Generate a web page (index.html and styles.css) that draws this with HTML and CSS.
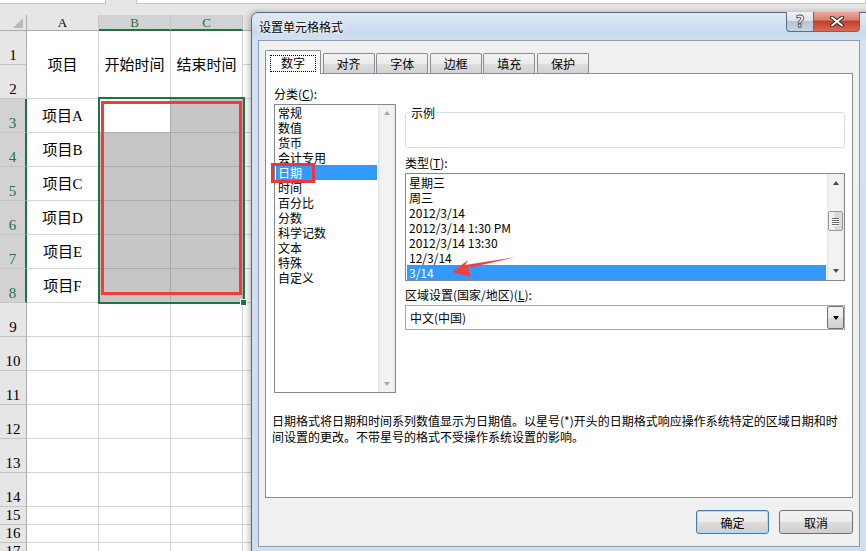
FILE: index.html
```html
<!DOCTYPE html>
<html lang="zh-CN">
<head>
  <meta charset="UTF-8">
  <title>设置单元格格式</title>
  <link rel="stylesheet" href="styles.css">
</head>
<body>
  <!-- Worksheet -->
  <div class="sheet">
    <div class="strip">
      <div class="name-box"></div>
      <div class="formula-box"></div>
    </div>

    <div class="stack">
      <div class="cells">
        <div class="corner"></div>
        <div class="ch">A</div>
        <div class="ch sel">B</div>
        <div class="ch sel">C</div>
        <div class="ch">D</div>

        <div class="rh">1</div>
        <div class="c span2">项目</div>
        <div class="c span2">开始时间</div>
        <div class="c span2">结束时间</div>
        <div class="c"></div>
        <div class="rh">2</div>
        <div class="c"></div>

        <div class="rh sel">3</div>
        <div class="c">项目A</div>
        <div class="c pick active"></div>
        <div class="c pick"></div>
        <div class="c"></div>

        <div class="rh sel">4</div>
        <div class="c">项目B</div>
        <div class="c pick"></div>
        <div class="c pick"></div>
        <div class="c"></div>

        <div class="rh sel">5</div>
        <div class="c">项目C</div>
        <div class="c pick"></div>
        <div class="c pick"></div>
        <div class="c"></div>

        <div class="rh sel">6</div>
        <div class="c">项目D</div>
        <div class="c pick"></div>
        <div class="c pick"></div>
        <div class="c"></div>

        <div class="rh sel">7</div>
        <div class="c">项目E</div>
        <div class="c pick"></div>
        <div class="c pick"></div>
        <div class="c"></div>

        <div class="rh sel">8</div>
        <div class="c">项目F</div>
        <div class="c pick"></div>
        <div class="c pick"></div>
        <div class="c"></div>

        <div class="rh">9</div><div class="c"></div><div class="c"></div><div class="c"></div><div class="c"></div>
        <div class="rh">10</div><div class="c"></div><div class="c"></div><div class="c"></div><div class="c"></div>
        <div class="rh">11</div><div class="c"></div><div class="c"></div><div class="c"></div><div class="c"></div>
        <div class="rh">12</div><div class="c"></div><div class="c"></div><div class="c"></div><div class="c"></div>
        <div class="rh">13</div><div class="c"></div><div class="c"></div><div class="c"></div><div class="c"></div>
        <div class="rh">14</div><div class="c"></div><div class="c"></div><div class="c"></div><div class="c"></div>
        <div class="rh">15</div><div class="c"></div><div class="c"></div><div class="c"></div><div class="c"></div>
        <div class="rh">16</div><div class="c"></div><div class="c"></div><div class="c"></div><div class="c"></div>
        <div class="rh">17</div><div class="c"></div><div class="c"></div><div class="c"></div><div class="c"></div>
      </div>

      <!-- selection marks, same grid as the cells -->
      <div class="marks">
        <div class="sel-box">
          <div class="red-box"></div>
          <div class="handle"></div>
        </div>
      </div>
    </div>
  </div>

  <!-- Format Cells dialog -->
  <div class="dialog">
    <div class="titlebar">
      <div class="title">设置单元格格式</div>
      <div class="caption-btn help">?</div>
      <div class="caption-btn close">
        <svg width="14" height="11" viewBox="0 0 14 11"><path d="M2 1.5 L12 9.5 M12 1.5 L2 9.5" stroke="#3b2a28" stroke-width="4" stroke-linecap="round"/><path d="M2 1.5 L12 9.5 M12 1.5 L2 9.5" stroke="#fff" stroke-width="2" stroke-linecap="round"/></svg>
      </div>
    </div>

    <div class="dlg-body">
      <div class="tabs">
        <div class="tab active"><span class="focus">数字</span></div>
        <div class="tab">对齐</div>
        <div class="tab">字体</div>
        <div class="tab">边框</div>
        <div class="tab">填充</div>
        <div class="tab">保护</div>
      </div>

      <div class="page">
        <div class="panes">
          <div class="left">
            <div class="label">分类(<u>C</u>):</div>
            <div class="listbox cat-list">
              <div class="items">
                <div class="item">常规</div>
                <div class="item">数值</div>
                <div class="item">货币</div>
                <div class="item">会计专用</div>
                <div class="item chosen">日期</div>
                <div class="item">时间</div>
                <div class="item">百分比</div>
                <div class="item">分数</div>
                <div class="item">科学记数</div>
                <div class="item">文本</div>
                <div class="item">特殊</div>
                <div class="item">自定义</div>
              </div>
              <div class="vscroll off">
                <div class="arrow up"></div>
                <div class="arrow down"></div>
              </div>
              <div class="mark-date"></div>
            </div>
          </div>

          <div class="right">
            <div class="sample">
              <span class="sample-label">示例</span>
            </div>
            <div class="label type-label">类型(<u>T</u>):</div>
            <div class="listbox type-list">
              <div class="items">
                <div class="item">星期三</div>
                <div class="item">周三</div>
                <div class="item">2012/3/14</div>
                <div class="item">2012/3/14 1:30 PM</div>
                <div class="item">2012/3/14 13:30</div>
                <div class="item">12/3/14</div>
                <div class="item chosen">3/14</div>
              </div>
              <div class="vscroll">
                <div class="arrow up"></div>
                <div class="thumb"><i></i><i></i><i></i><i></i></div>
                <div class="arrow down"></div>
              </div>
              <svg class="pointer" width="120" height="110" viewBox="0 0 120 110">
                <polygon points="47,99 63,87 60,92 111,84 63,95 66,104" fill="#f0403f"/>
              </svg>
            </div>
            <div class="label locale-label">区域设置(国家/地区)(<u>L</u>):</div>
            <div class="combo">
              <div class="combo-text">中文(中国)</div>
              <div class="combo-btn"><span class="arrow down dark"></span></div>
            </div>
          </div>
        </div>

        <div class="desc">日期格式将日期和时间系列数值显示为日期值。以星号(*)开头的日期格式响应操作系统特定的区域日期和时<br>间设置的更改。不带星号的格式不受操作系统设置的影响。</div>
      </div>

      <div class="actions">
        <div class="btn default">确定</div>
        <div class="btn">取消</div>
      </div>
    </div>
  </div>
</body>
</html>
```

FILE: styles.css
```css
* {
  margin: 0;
  padding: 0;
  box-sizing: border-box;
}

body {
  width: 866px;
  height: 551px;
  overflow: hidden;
  position: relative;
  background-color: #ffffff;
  font-family: "Noto Sans CJK SC", sans-serif;
  color: #000;
}

/* ---------- worksheet ---------- */

.sheet {
  width: 866px;
}

.strip {
  height: 15px;
  background-color: #e6e6e6;
  display: flex;
}

.name-box,
.formula-box {
  height: 4px;
  background-color: #ffffff;
  border-right: 1px solid #c6c6c6;
  border-bottom: 1px solid #c6c6c6;
}

.name-box {
  width: 106px;
}

.formula-box {
  margin-left: 30px;
  border-left: 1px solid #c6c6c6;
  flex-grow: 1;
}

.stack {
  display: grid;
}

.cells,
.marks {
  grid-area: 1 / 1;
  display: grid;
  grid-template-columns: 27px 72px 72px 72px 72px;
  grid-template-rows: 16px repeat(14, 34px) repeat(3, 18px);
}

.marks {
  pointer-events: none;
}

.corner {
  background-color: #e6e6e6;
  border-right: 1px solid #ababab;
  border-bottom: 1px solid #ababab;
  position: relative;
}

.corner::after {
  content: "";
  position: absolute;
  right: 3px;
  bottom: 2px;
  border-left: 10px solid transparent;
  border-bottom: 10px solid #b9b9b9;
}

.ch {
  background-color: #e6e6e6;
  border-right: 1px solid #c4c4c4;
  border-bottom: 1px solid #ababab;
  font: 13px/15px "Liberation Serif", serif;
  display: flex;
  align-items: center;
  justify-content: center;
}

.ch.sel {
  background-color: #d2d2d2;
  color: #217346;
  border-bottom: 2px solid #217346;
}

.rh {
  background-color: #e6e6e6;
  border-right: 1px solid #ababab;
  border-bottom: 1px solid #c4c4c4;
  font: 15px/16px "Liberation Serif", serif;
  display: flex;
  align-items: flex-end;
  justify-content: center;
  padding-bottom: 1px;
}

.rh.sel {
  background-color: #d2d2d2;
  color: #217346;
  border-right: 2px solid #217346;
}

.c {
  border-right: 1px solid #d4d4d4;
  border-bottom: 1px solid #d4d4d4;
  font: 15px/18px "Liberation Serif", "Noto Sans CJK SC", serif;
  display: flex;
  align-items: center;
  justify-content: center;
}

.c.span2 {
  grid-row: span 2;
}

.c.pick {
  background-color: #c6c6c6;
  border-color: #ababab;
}

.c.active {
  background-color: #ffffff;
}

.sel-box {
  grid-column: 3 / 5;
  grid-row: 4 / 10;
  margin: -2px -2px -1px -1px;
  border: 2px solid #217346;
  display: flex;
  flex-direction: column;
  position: relative;
}

.red-box {
  flex-grow: 1;
  margin: 2px 1px 7px 1px;
  border: 3px solid #f33b3b;
}

.handle {
  position: absolute;
  right: -4px;
  bottom: -4px;
  width: 7px;
  height: 7px;
  background-color: #217346;
  border: 1px solid #ffffff;
}

/* ---------- dialog ---------- */

.dialog {
  position: absolute;
  left: 251px;
  top: 12px;
  width: 630px;
  height: 545px;
  border: 1px solid #56697f;
  border-radius: 7px 7px 0 0;
  background: linear-gradient(180deg, #dfe9f5 0px, #c8daee 20px, #d3e2f2 28px, #cddff1 100%);
  padding-left: 6px;
  box-shadow: -2px 0 6px rgba(0, 0, 0, 0.25);
}

.titlebar {
  width: 602px;
  height: 27px;
  display: flex;
  align-items: center;
}

.title {
  font-size: 12px;
  line-height: 16px;
  padding-left: 1px;
  flex-grow: 1;
  text-shadow: 0 0 6px #ffffff, 0 0 3px #ffffff;
}

.caption-btn {
  align-self: flex-start;
  height: 20px;
  margin-top: -1px;
  border: 1px solid #5d6c80;
  border-top: none;
  display: flex;
  align-items: center;
  justify-content: center;
}

.help {
  width: 27px;
  border-radius: 0 0 0 4px;
  border-right: none;
  background: linear-gradient(180deg, #eef2f7 0%, #dbe2ea 45%, #b8c4d1 50%, #c9d4df 100%);
  font: bold 15px/16px "DejaVu Sans", sans-serif;
  color: #ffffff;
  -webkit-text-stroke: 0.8px #3f4b58;
}

.close {
  width: 47px;
  border-radius: 0 0 4px 0;
  background: linear-gradient(180deg, #e9a99a 0%, #d9826f 40%, #c4402b 50%, #d56b53 100%);
}

.dlg-body {
  width: 602px;
  height: 507px;
  border: 1px solid #8c9bae;
  background-color: #f0f0f0;
  padding: 9px 6px 0 6px;
}

.tabs {
  display: flex;
  height: 24px;
  margin-bottom: -1px;
  position: relative;
  z-index: 1;
  font-size: 12px;
}

.tab {
  width: 52px;
  height: 20px;
  margin-top: 3px;
  margin-left: 1.6px;
  border: 1px solid #898c95;
  border-bottom: none;
  border-radius: 2px 2px 0 0;
  background: linear-gradient(180deg, #f3f3f3 0%, #ebebeb 50%, #dedede 50%, #d2d2d2 100%);
  display: flex;
  align-items: center;
  justify-content: center;
  line-height: 16px;
}

.tab.active {
  width: 56px;
  height: 24px;
  margin: 0;
  background: #ffffff;
}

.focus {
  width: 46px;
  height: 17px;
  margin-top: 1px;
  border: 1px dotted #000;
  display: flex;
  align-items: center;
  justify-content: center;
}

.page {
  width: 588px;
  height: 425px;
  border: 1px solid #898c95;
  background-color: #ffffff;
  padding: 12px 0 0 8px;
  font-size: 12px;
  line-height: 15px;
}

.panes {
  display: grid;
  grid-template-columns: 122px 440px;
  column-gap: 9px;
}

.label {
  height: 15px;
  margin-bottom: 3px;
}

u {
  text-decoration: underline;
  text-underline-offset: 1px;
}

.listbox {
  border: 1px solid #828790;
  display: flex;
  position: relative;
}

.items {
  flex-grow: 1;
  padding: 1px 1px 0 1px;
}

.item {
  height: 15px;
  padding-left: 2px;
  white-space: nowrap;
}

.item.chosen {
  background-color: #3399ff;
  color: #ffffff;
}

.cat-list {
  height: 289px;
}

.cat-list .items {
  padding-top: 0;
}

.vscroll {
  width: 17px;
  background: linear-gradient(90deg, #e3e3e3 0%, #f2f2f2 15%, #f2f2f2 85%, #e6e6e6 100%);
  display: flex;
  flex-direction: column;
  justify-content: space-between;
  align-items: center;
  padding: 6px 0;
}

.arrow {
  width: 0;
  height: 0;
  border-left: 3.5px solid transparent;
  border-right: 3.5px solid transparent;
}

.arrow.up {
  border-bottom: 4px solid #4a4a4a;
}

.arrow.down {
  border-top: 4px solid #4a4a4a;
}

.vscroll.off .arrow.up {
  border-bottom-color: #a6a6a6;
}

.vscroll.off .arrow.down {
  border-top-color: #a6a6a6;
}

.thumb {
  width: 15px;
  height: 20px;
  margin-top: 26px;
  margin-bottom: auto;
  border: 1px solid #979797;
  border-radius: 2px;
  background: linear-gradient(90deg, #f2f2f2 0%, #e8e8e8 50%, #d6d6d6 50%, #dcdcdc 100%);
  display: flex;
  flex-direction: column;
  justify-content: center;
  align-items: center;
  gap: 1px;
}

.thumb i {
  display: block;
  width: 7px;
  height: 1px;
  background-color: #6d6d6d;
  box-shadow: 0 1px 0 #ffffff;
}

.type-list .vscroll {
  padding-top: 7px;
  padding-bottom: 7px;
}

.mark-date {
  position: absolute;
  left: -4px;
  top: 58px;
  width: 44px;
  height: 20px;
  border: 3px solid #e8383a;
}

.sample {
  height: 36px;
  margin-top: 26px;
  border: 1px solid #d5dfe5;
  border-radius: 3px;
}

.sample-label {
  display: inline-block;
  margin: -8px 0 0 4px;
  padding: 0 1px;
  background-color: #ffffff;
  vertical-align: top;
}

.type-label {
  margin-top: 7px;
}

.type-list {
  height: 108px;
}

.pointer {
  position: absolute;
  left: -1px;
  top: -1px;
}

.locale-label {
  margin-top: 6px;
}

.combo {
  height: 25px;
  border: 1px solid #a4a9b0;
  display: flex;
  align-items: center;
}

.combo-text {
  flex-grow: 1;
  padding-left: 4px;
}

.combo-btn {
  width: 17px;
  height: 23px;
  border: 1px solid #707070;
  border-radius: 2px;
  background: linear-gradient(180deg, #f2f2f2 0%, #ebebeb 50%, #dddddd 50%, #cfcfcf 100%);
  display: flex;
  align-items: center;
  justify-content: center;
}

.arrow.dark {
  border-top-color: #000;
}

.desc {
  margin: 20px 0 0 -2px;
  line-height: 16px;
  white-space: nowrap;
}

.actions {
  display: flex;
  justify-content: flex-end;
  gap: 10px;
  margin-top: 12px;
}

.btn {
  width: 74px;
  height: 24px;
  border: 1px solid #707070;
  border-radius: 3px;
  background: linear-gradient(180deg, #f2f2f2 0%, #ebebeb 50%, #dddddd 50%, #cfcfcf 100%);
  font-size: 12px;
  display: flex;
  align-items: center;
  justify-content: center;
}

.btn.default {
  width: 73px;
  border-color: #3c7fb1;
  box-shadow: inset 0 0 0 1px #a6dcf6;
}
```
